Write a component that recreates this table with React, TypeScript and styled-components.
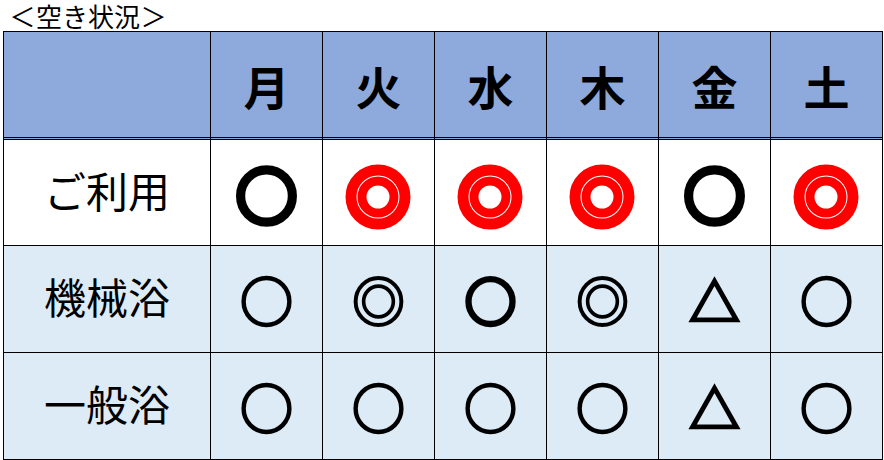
import React from "react";
import styled, { createGlobalStyle, css } from "styled-components";

const GlobalStyle = createGlobalStyle`
  html, body {
    margin: 0;
    padding: 0;
    background: #ffffff;
  }
  body {
    font-family: "Noto Sans CJK JP", "Noto Sans", sans-serif;
    color: #000;
  }
`;

const Page = styled.div`
  width: 884px;
  height: 460px;
  overflow: hidden;
  display: flex;
  flex-direction: column;
`;

const Title = styled.div`
  height: 31px;
  padding-left: 9px;
  font-size: 26px;
  line-height: 31px;
  white-space: nowrap;
  display: flex;
  align-items: center;
`;

const Bracket = styled.span`
  display: inline-block;
  width: 27px;
  text-align: center;
`;

const Table = styled.div`
  margin-left: 3px;
  display: grid;
  grid-template-columns: 207px repeat(6, 112px);
  grid-template-rows: 108px 106px 107px 107px;
  border-top: 1px solid #000;
  border-left: 1px solid #000;
  width: 880px;
  box-sizing: border-box;
`;

type Tone = "head" | "white" | "light";

const bg: Record<Tone, string> = {
  head: "#8EA9DB",
  white: "#FFFFFF",
  light: "#DDEBF7",
};

const Cell = styled.div<{ $tone: Tone; $double?: boolean }>`
  box-sizing: border-box;
  border-right: 1px solid #000;
  border-bottom: 1px solid #000;
  background: ${(p) => bg[p.$tone]};
  display: flex;
  align-items: center;
  justify-content: center;
  overflow: hidden;
  ${(p) =>
    p.$double &&
    css`
      border-bottom: 3px double #000;
    `}
`;

const DayLabel = styled.span`
  font-size: 46px;
  font-weight: 700;
  line-height: 1;
`;

const RowLabel = styled.span`
  font-size: 42px;
  font-weight: 400;
  line-height: 1;
  margin-top: -6px;
`;

type MarkKind = "good" | "best" | "fair";

type MarkLook = { size: number; stroke: number };

const Mark = styled.span<{ $size: number; $stroke: number }>`
  font-family: "Noto Sans CJK JP", sans-serif;
  line-height: 1;
  font-size: ${(p) => p.$size}px;
  font-weight: 400;
  color: #000;
  -webkit-text-stroke: ${(p) => p.$stroke}px #000;
  paint-order: stroke fill;
`;

/* Bold red double circle: the ◎ glyph, with its two rings drawn as thick round bands */
const RedBest = styled.span`
  position: relative;
  display: inline-block;
  font-family: "Noto Sans CJK JP", sans-serif;
  font-size: 62px;
  line-height: 1;
  color: #ff0000;
  margin-top: 2px;

  &::before,
  &::after {
    content: "";
    position: absolute;
    left: 50%;
    top: 0.556em;
    transform: translate(-50%, -50%);
    box-sizing: border-box;
    border-radius: 50%;
    border-style: solid;
    border-color: #ff0000;
  }
  &::before {
    width: 65px;
    height: 65px;
    border-width: 11px;
  }
  &::after {
    width: 41px;
    height: 41px;
    border-width: 9px;
    background: #ffffff;
  }
`;

const glyph: Record<MarkKind, string> = {
  good: "○",
  best: "◎",
  fair: "△",
};

type MarkSpec = { kind: MarkKind; look?: MarkLook; red?: boolean };

const bigGood: MarkLook = { size: 60, stroke: 7 };
const good: MarkLook = { size: 53, stroke: 2.5 };
const boldGood: MarkLook = { size: 51, stroke: 4.5 };
const best: MarkLook = { size: 53, stroke: 2 };
const fair: MarkLook = { size: 50, stroke: 3 };

const days = ["月", "火", "水", "木", "金", "土"];

const rows: { label: string; tone: Tone; marks: MarkSpec[] }[] = [
  {
    label: "ご利用",
    tone: "white",
    marks: [
      { kind: "good", look: bigGood },
      { kind: "best", red: true },
      { kind: "best", red: true },
      { kind: "best", red: true },
      { kind: "good", look: bigGood },
      { kind: "best", red: true },
    ],
  },
  {
    label: "機械浴",
    tone: "light",
    marks: [
      { kind: "good", look: good },
      { kind: "best", look: best },
      { kind: "good", look: boldGood },
      { kind: "best", look: best },
      { kind: "fair", look: fair },
      { kind: "good", look: good },
    ],
  },
  {
    label: "一般浴",
    tone: "light",
    marks: [
      { kind: "good", look: good },
      { kind: "good", look: good },
      { kind: "good", look: good },
      { kind: "good", look: good },
      { kind: "fair", look: fair },
      { kind: "good", look: good },
    ],
  },
];

function MarkView({ m }: { m: MarkSpec }) {
  if (m.red) return <RedBest>{glyph[m.kind]}</RedBest>;
  const look = m.look ?? good;
  return (
    <Mark $size={look.size} $stroke={look.stroke}>
      {glyph[m.kind]}
    </Mark>
  );
}

export default function App() {
  return (
    <Page>
      <GlobalStyle />
      <Title>
        <Bracket>＜</Bracket>空き状況<Bracket>＞</Bracket>
      </Title>
      <Table>
        <Cell $tone="head" $double />
        {days.map((d) => (
          <Cell key={d} $tone="head" $double>
            <DayLabel>{d}</DayLabel>
          </Cell>
        ))}
        {rows.map((r) => (
          <React.Fragment key={r.label}>
            <Cell $tone={r.tone}>
              <RowLabel>{r.label}</RowLabel>
            </Cell>
            {r.marks.map((m, i) => (
              <Cell key={i} $tone={r.tone}>
                <MarkView m={m} />
              </Cell>
            ))}
          </React.Fragment>
        ))}
      </Table>
    </Page>
  );
}
